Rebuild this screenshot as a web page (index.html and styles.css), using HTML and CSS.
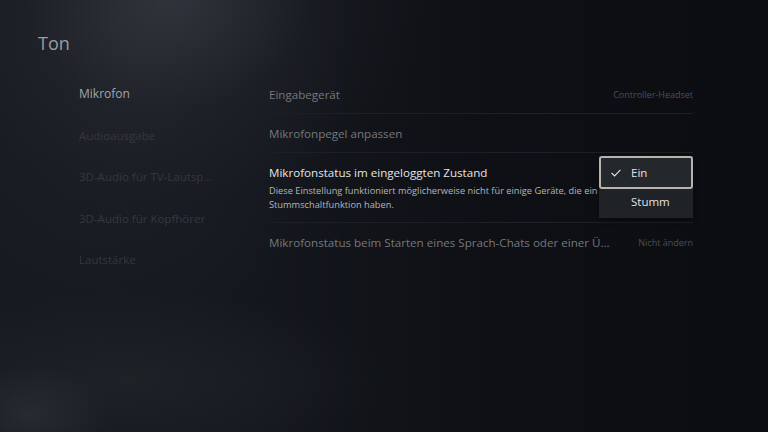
FILE: index.html
```html
<!DOCTYPE html>
<html lang="de">
<head>
<meta charset="utf-8">
<link rel="stylesheet" href="styles.css">
</head>
<body>
<div class="screen">
  <div class="glow-top"></div>
  <div class="glow-bottom"></div>
  <h1 class="title">Ton</h1>
  <div class="columns">
    <nav class="nav">
      <div class="nav-item active">Mikrofon</div>
      <div class="nav-item">Audioausgabe</div>
      <div class="nav-item">3D-Audio für TV-Lautsp...</div>
      <div class="nav-item">3D-Audio für Kopfhörer</div>
      <div class="nav-item">Lautstärke</div>
    </nav>
    <div class="list">
      <div class="row">
        <span class="row-title">Eingabegerät</span>
        <span class="row-value">Controller-Headset</span>
      </div>
      <div class="row">
        <span class="row-title">Mikrofonpegel anpassen</span>
      </div>
      <div class="row focused">
        <div class="row-body">
          <span class="row-title">Mikrofonstatus im eingeloggten Zustand</span>
          <p class="row-desc">Diese Einstellung funktioniert möglicherweise nicht für einige Geräte, die ein<br>Stummschaltfunktion haben.</p>
        </div>
        <div class="dropdown">
          <div class="option selected"><svg class="check" width="10" height="8" viewBox="0 0 10 8"><path d="M0.6 4.0 L3.6 6.9 L9.4 0.8" fill="none" stroke="#e2e3e5" stroke-width="1.1"/></svg>Ein</div>
          <div class="option">Stumm</div>
        </div>
      </div>
      <div class="row last">
        <span class="row-title">Mikrofonstatus beim Starten eines Sprach-Chats oder einer Ü...</span>
        <span class="row-value">Nicht ändern</span>
      </div>
    </div>
  </div>
</div>
</body>
</html>
```
FILE: styles.css
```css
html, body {
  margin: 0;
  padding: 0;
  background: #0c0e13;
}
.screen {
  position: relative;
  width: 768px;
  height: 432px;
  overflow: hidden;
  font-family: "Open Sans", "Noto Sans", sans-serif;
  background:
    radial-gradient(ellipse 260px 200px at 170px 0px, rgba(70,74,82,0.5), rgba(40,43,50,0.22) 55%, rgba(0,0,0,0) 100%),
    linear-gradient(90deg, #16191f 0px, #14171d 250px, #0e1015 480px, #0b0d11 768px);
}
.glow-top, .glow-bottom {
  position: absolute;
  pointer-events: none;
}
.glow-top {
  left: -100px;
  top: 0;
  width: 450px;
  height: 432px;
  background: radial-gradient(ellipse 220px 300px at 230px 60px, rgba(60,64,72,0.22), rgba(0,0,0,0) 100%);
}
.glow-bottom {
  left: -150px;
  top: 270px;
  width: 600px;
  height: 200px;
  background:
    radial-gradient(ellipse 80px 50px at 180px 145px, rgba(58,62,70,0.4), rgba(0,0,0,0) 100%),
    radial-gradient(ellipse 260px 90px at 280px 110px, rgba(44,50,54,0.4), rgba(0,0,0,0) 100%);
}
.title {
  position: relative;
  margin: 0;
  padding: 30px 0 0 38px;
  height: 26px;
  line-height: 26px;
  font-size: 18px;
  font-weight: 400;
  color: #9a9ca1;
  margin-bottom: 17px;
}
.columns {
  position: relative;
  display: flex;
  padding-left: 79px;
}
.nav {
  width: 190px;
  display: flex;
  flex-direction: column;
}
.nav-item {
  height: 41.5px;
  line-height: 41.5px;
  font-size: 11.5px;
  color: #35383f;
  white-space: nowrap;
}
.nav-item.active {
  color: #a3a5aa;
  font-size: 12px;
}
.list {
  width: 424px;
  display: flex;
  flex-direction: column;
  margin-top: 2px;
}
.row {
  position: relative;
  display: flex;
  align-items: center;
  justify-content: space-between;
  height: 38px;
  border-bottom: 1px solid #1c1f26;
}
.row.last {
  border-bottom: none;
}
.row-title {
  font-size: 11.6px;
  color: #75787d;
  white-space: nowrap;
}
.row-value {
  font-size: 9px;
  color: #4b4e54;
}
.row.focused {
  height: 69px;
  align-items: flex-start;
}
.row-body {
  padding-top: 11px;
}
.row.focused .row-title {
  color: #e4e5e7;
  display: block;
  line-height: 17px;
}
.row-desc {
  margin: 3px 0 0 0;
  font-size: 9.25px;
  line-height: 14px;
  color: #b4b6b9;
}
.dropdown {
  position: absolute;
  left: 330px;
  top: 3px;
  width: 94px;
  background: #1f2226;
  box-shadow: 0 2px 6px rgba(0,0,0,0.4);
}
.option {
  display: flex;
  align-items: center;
  height: 25px;
  padding: 0 0 4px 32px;
  font-size: 11.5px;
  color: #e2e3e5;
  position: relative;
}
.option.selected {
  height: 29px;
  padding: 0 0 0 30px;
  border: 2px solid #b9b3ad;
  border-radius: 3px;
  background: #24272b;
}
.check {
  position: absolute;
  left: 10px;
  top: 11px;
}
```
